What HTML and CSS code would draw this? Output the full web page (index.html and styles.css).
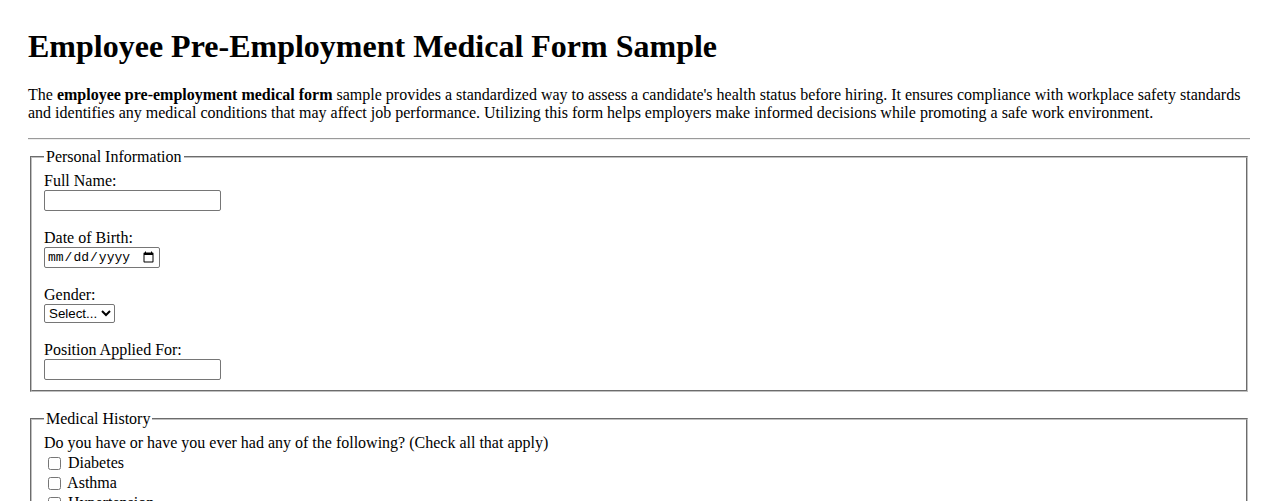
FILE: index.html
```html
<!DOCTYPE html>
<html lang="en">
<head>
<meta charset="utf-8">
<title>Employee Pre-Employment Medical Form Sample</title>
<link rel="stylesheet" href="styles.css">
</head>
<body>
<div class="page">
  <h1 class="title">Employee Pre-Employment Medical Form Sample</h1>
  <p class="intro">The <strong>employee pre-employment medical form</strong> sample provides a standardized way to assess a candidate's health status before hiring. It ensures compliance with workplace safety standards and identifies any medical conditions that may affect job performance. Utilizing this form helps employers make informed decisions while promoting a safe work environment.</p>
  <hr class="rule">
  <form class="form">
    <fieldset class="section">
      <legend class="legend">Personal Information</legend>
      <div class="field">
        <label class="label" for="name">Full Name:</label>
        <input class="text-input" type="text" id="name">
      </div>
      <div class="field">
        <label class="label" for="dob">Date of Birth:</label>
        <input class="date-input" type="date" id="dob">
      </div>
      <div class="field">
        <label class="label" for="gender">Gender:</label>
        <select class="select" id="gender">
          <option>Select...</option>
          <option>Male</option>
          <option>Female</option>
          <option>Other</option>
        </select>
      </div>
      <div class="field">
        <label class="label" for="position">Position Applied For:</label>
        <input class="text-input" type="text" id="position">
      </div>
    </fieldset>
    <fieldset class="section">
      <legend class="legend">Medical History</legend>
      <div class="question">Do you have or have you ever had any of the following? (Check all that apply)</div>
      <label class="check"><input class="checkbox" type="checkbox"> Diabetes</label>
      <label class="check"><input class="checkbox" type="checkbox"> Asthma</label>
      <label class="check"><input class="checkbox" type="checkbox"> Hypertension</label>
      <label class="check"><input class="checkbox" type="checkbox"> Heart Disease</label>
      <label class="check"><input class="checkbox" type="checkbox"> Epilepsy</label>
    </fieldset>
  </form>
</div>
</body>
</html>
```
FILE: styles.css
```css
html, body {
  margin: 0;
  padding: 0;
  background: #ffffff;
}
.page {
  padding: 28px;
  font-family: "Liberation Serif", "Times New Roman", serif;
  font-size: 16px;
  color: #000;
}
.title {
  margin: 0 0 21.44px;
  font-size: 32px;
  font-weight: bold;
}
.intro {
  margin: 0 0 16px;
}
.rule {
  margin: 0 0 8px;
  border: 0;
  border-top: 1px solid #9a9a9a;
  border-bottom: 1px solid #eeeeee;
  height: 0;
}
.form {
  margin: 0;
}
.section {
  margin: 0 2px;
  padding: 5.6px 12px 10px;
  border: 2px groove #c0c0c0;
}
.section + .section {
  margin-top: 18px;
}
.legend {
  padding: 0 2px;
}
.field {
  margin-bottom: 18px;
}
.field:last-child {
  margin-bottom: 0;
}
.label {
  display: block;
}
.text-input,
.date-input,
.select {
  display: block;
  box-sizing: border-box;
  margin: 0;
  border: 1px solid #767676;
  border-radius: 2px;
  background: #fff;
  color: #000;
}
.text-input {
  width: 177px;
  height: 21px;
  padding: 1px 2px;
  font: 13.33px "Liberation Sans", Arial, sans-serif;
}
.date-input {
  width: 116px;
  height: 21px;
  padding: 1px 2px;
  font: 13px "Liberation Mono", "Courier New", monospace;
}
.select {
  width: 71px;
  height: 19px;
  padding: 0;
  font: 13.33px "Liberation Sans", Arial, sans-serif;
}
.question {
  line-height: 18.4px;
  padding-bottom: 1px;
}
.check {
  display: block;
  height: 20px;
  line-height: 20px;
}
.checkbox {
  width: 13px;
  height: 13px;
  margin: 3px 3px 3px 4px;
  vertical-align: -2px;
}
```
